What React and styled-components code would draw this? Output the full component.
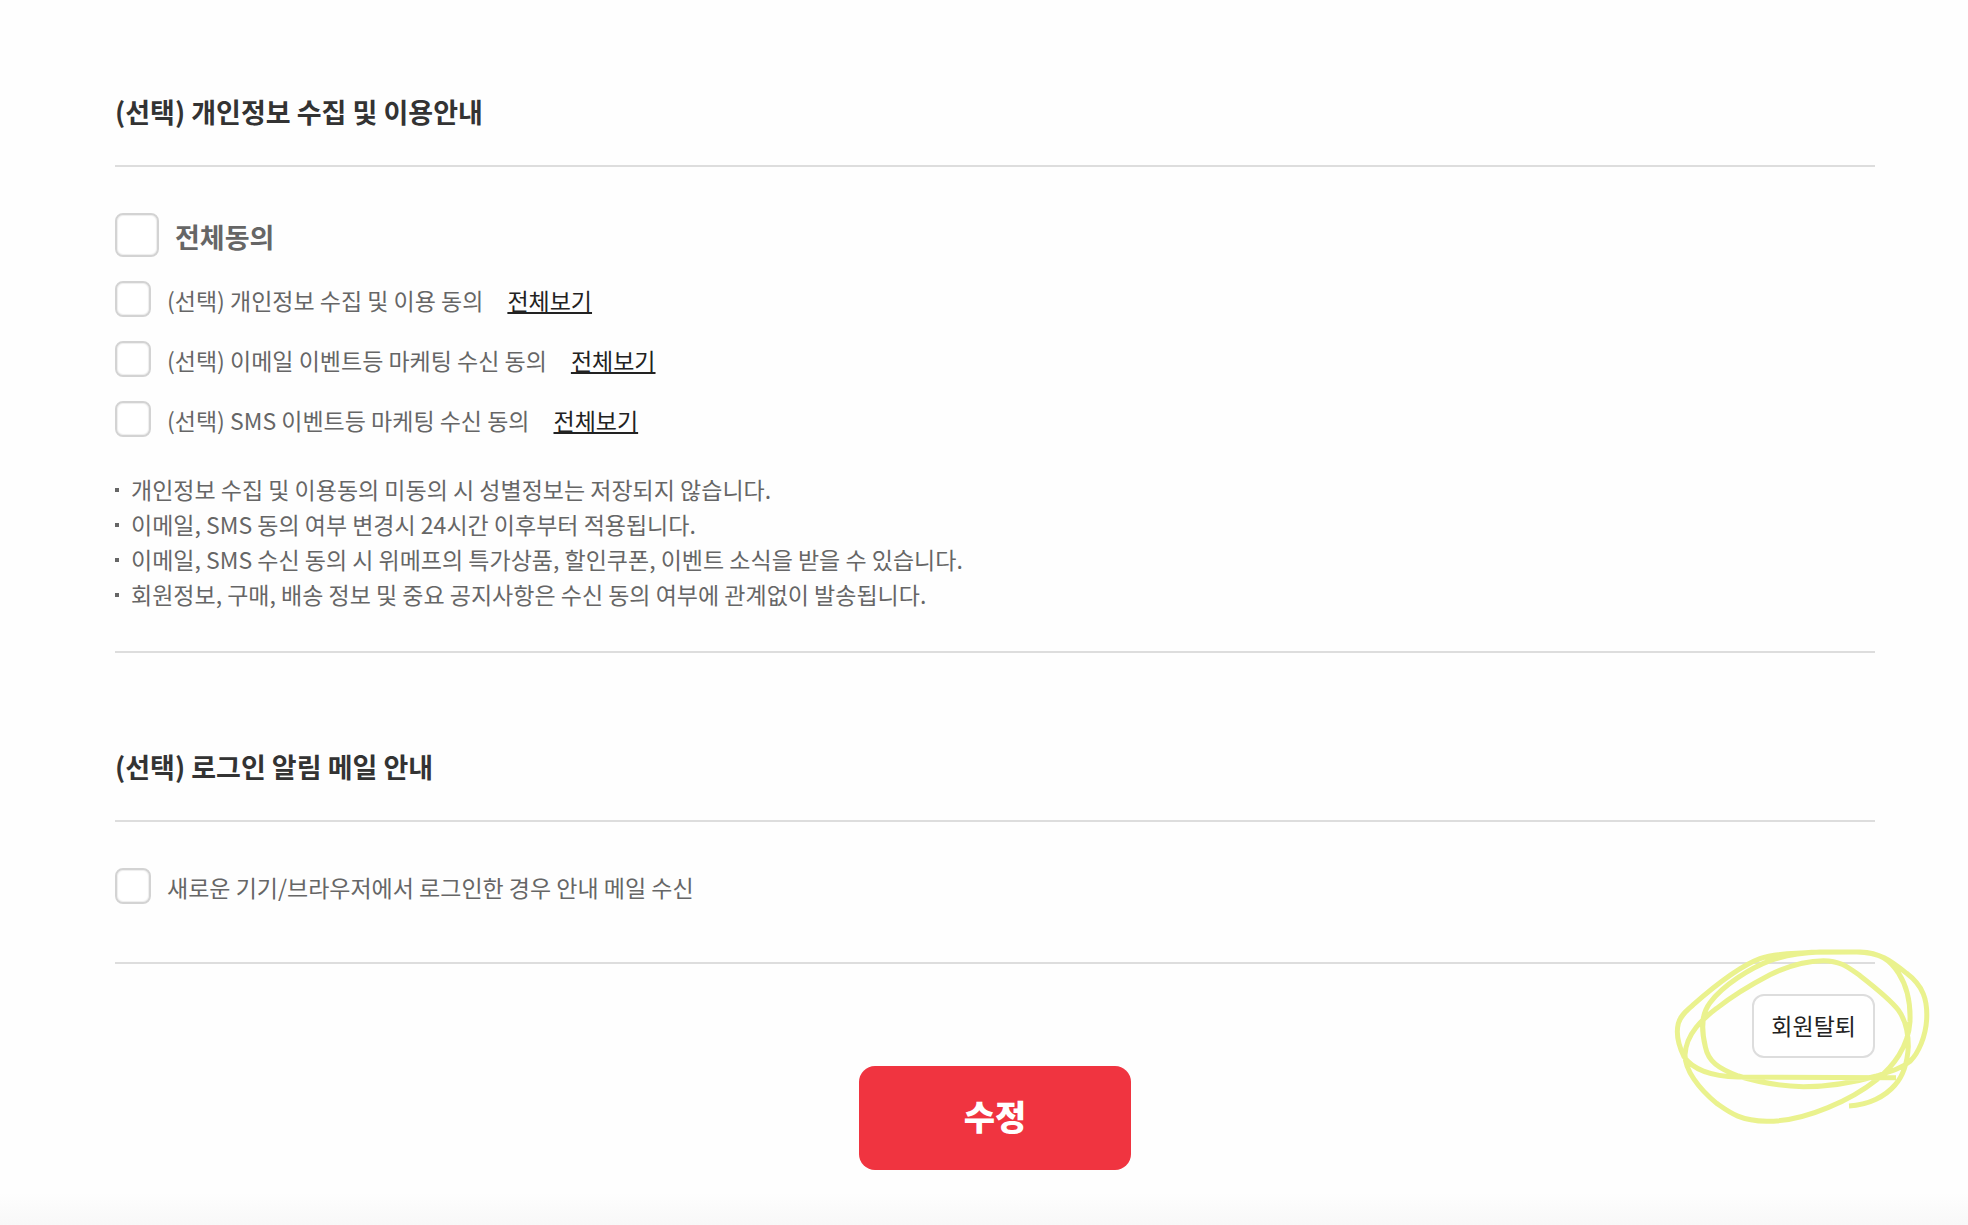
import React, { useState } from "react";
import styled, { createGlobalStyle } from "styled-components";

const GlobalStyle = createGlobalStyle`
  * { box-sizing: border-box; }
  body {
    margin: 0;
    background: #fefefe;
    color: #666;
    font-family: "Noto Sans CJK KR", "Noto Sans", sans-serif;
    font-size: 23px;
    line-height: 35px;
  }
`;

const Page = styled.main`
  display: flex;
  flex-direction: column;
  min-height: 100vh;
  padding: 92px 93px 0 115px;
`;

const Section = styled.section`
  border-bottom: 2px solid #ddd;
  padding-bottom: ${(p) => p.$bottom}px;
  & + & { margin-top: 94px; }
`;

const Heading = styled.h2`
  margin: 0;
  padding-bottom: 33px;
  border-bottom: 2px solid #ddd;
  color: #333;
  font-size: 27px;
  font-weight: 700;
  line-height: 40px;
`;

const Options = styled.div`
  display: flex;
  flex-direction: column;
  gap: 24px;
  padding-top: 46px;
`;

const OptionRow = styled.div`
  display: flex;
  align-items: center;
`;

const CheckLabel = styled.label`
  display: flex;
  align-items: center;
  gap: 16px;
  cursor: pointer;
  font-size: ${(p) => (p.$large ? 27 : 23)}px;
  font-weight: ${(p) => (p.$large ? 700 : 400)};
  line-height: 34px;
`;

const LabelText = styled.span`
  padding-top: ${(p) => (p.$large ? 4 : 2)}px;
`;

const Checkbox = styled.input`
  appearance: none;
  flex: none;
  width: ${(p) => (p.$large ? 44 : 36)}px;
  height: ${(p) => (p.$large ? 44 : 36)}px;
  margin: 0;
  border: 2px solid #d3d3d3;
  border-radius: 8px;
  background: #fff;
  box-shadow: inset 0 0 1px 1px #eee;
  cursor: pointer;
  &:checked { background: #f03440; border-color: #f03440; box-shadow: inset 0 0 0 6px #fff; }
`;

const ViewLink = styled.a`
  margin-left: 24px;
  padding-top: 2px;
  color: #222;
  line-height: 34px;
  text-decoration: underline;
  text-decoration-thickness: 2px;
  text-underline-offset: 2px;
`;

const Notes = styled.ul`
  margin: 35px 0 0;
  padding: 0;
  list-style: none;
`;

const Note = styled.li`
  display: flex;
  align-items: center;
  gap: 12px;
  &::before {
    content: "";
    flex: none;
    width: 4px;
    height: 4px;
    background: #666;
  }
`;

const Actions = styled.div`
  display: flex;
  flex-direction: column;
  align-items: center;
  gap: 8px;
  padding-top: 30px;
`;

const Marked = styled.div`
  position: relative;
  align-self: flex-end;
`;

const WithdrawButton = styled.button`
  display: block;
  height: 64px;
  padding: 0 17px 2px;
  border: 2px solid #ddd;
  border-radius: 12px;
  background: #fff;
  color: #222;
  font: inherit;
  cursor: pointer;
`;

const Scribble = styled.svg`
  position: absolute;
  top: -64px;
  right: -85px;
  width: 300px;
  height: 210px;
  pointer-events: none;
`;

const SubmitButton = styled.button`
  width: 272px;
  height: 104px;
  padding: 0 0 6px;
  border: 0;
  border-radius: 16px;
  background: #f03440;
  color: #fff;
  font-family: inherit;
  font-size: 34px;
  font-weight: 900;
  cursor: pointer;
`;

const BottomFade = styled.div`
  height: 32px;
  margin: auto -93px 0 -115px;
  background: linear-gradient(#fefefe, #f8f8f8);
`;

const consents = [
  { id: "privacy", text: "(선택) 개인정보 수집 및 이용 동의" },
  { id: "email", text: "(선택) 이메일 이벤트등 마케팅 수신 동의" },
  { id: "sms", text: "(선택) SMS 이벤트등 마케팅 수신 동의" },
];

const notes = [
  "개인정보 수집 및 이용동의 미동의 시 성별정보는 저장되지 않습니다.",
  "이메일, SMS 동의 여부 변경시 24시간 이후부터 적용됩니다.",
  "이메일, SMS 수신 동의 시 위메프의 특가상품, 할인쿠폰, 이벤트 소식을 받을 수 있습니다.",
  "회원정보, 구매, 배송 정보 및 중요 공지사항은 수신 동의 여부에 관계없이 발송됩니다.",
];

function CheckField({ id, large, checked, onChange, children }) {
  return (
    <CheckLabel htmlFor={id} $large={large}>
      <Checkbox id={id} type="checkbox" $large={large} checked={checked} onChange={onChange} />
      <LabelText $large={large}>{children}</LabelText>
    </CheckLabel>
  );
}

export default function App() {
  const [agreed, setAgreed] = useState({});
  const [loginMail, setLoginMail] = useState(false);
  const all = consents.every((c) => agreed[c.id]);

  const toggleAll = () =>
    setAgreed(Object.fromEntries(consents.map((c) => [c.id, !all])));

  return (
    <>
      <GlobalStyle />
      <Page>
        <Section $bottom={39}>
          <Heading>(선택) 개인정보 수집 및 이용안내</Heading>
          <Options>
            <OptionRow>
              <CheckField id="all" large checked={all} onChange={toggleAll}>
                전체동의
              </CheckField>
            </OptionRow>
            {consents.map((c) => (
              <OptionRow key={c.id}>
                <CheckField
                  id={c.id}
                  checked={!!agreed[c.id]}
                  onChange={() => setAgreed({ ...agreed, [c.id]: !agreed[c.id] })}
                >
                  {c.text}
                </CheckField>
                <ViewLink href={`#${c.id}`}>전체보기</ViewLink>
              </OptionRow>
            ))}
          </Options>
          <Notes>
            {notes.map((n) => (
              <Note key={n}>{n}</Note>
            ))}
          </Notes>
        </Section>

        <Section $bottom={58}>
          <Heading>(선택) 로그인 알림 메일 안내</Heading>
          <Options>
            <OptionRow>
              <CheckField id="login-mail" checked={loginMail} onChange={() => setLoginMail(!loginMail)}>
                새로운 기기/브라우저에서 로그인한 경우 안내 메일 수신
              </CheckField>
            </OptionRow>
          </Options>
        </Section>

        <Actions>
          <Marked>
            <WithdrawButton type="button">회원탈퇴</WithdrawButton>
            <Scribble viewBox="0 0 900 630" fill="none" stroke="#eaf28e" strokeWidth="15" aria-hidden="true">
              <path d="M708 443 L235 441 C150 439 95 415 72 380 C50 335 50 300 55 280 C62 255 80 243 100 224 C150 180 230 112 300 86 C350 68 400 72 455 67 L590 66 C660 67 690 90 740 130 C790 168 803 210 800 268 C797 320 775 370 750 394 C725 415 690 425 650 438 C580 458 510 470 430 470 C350 468 290 455 235 438 C175 415 145 395 136 350 C124 300 122 255 150 218 C190 165 270 115 330 92 C380 74 420 68 480 66 L600 66 C660 68 690 90 716 130 C742 170 752 220 750 275 C745 350 700 410 650 449 C580 505 440 575 320 574 C240 572 210 548 170 520 C115 475 75 420 75 375 C78 310 130 265 170 235 C220 195 280 160 330 134 C390 105 440 92 490 92 C545 93 565 113 600 137 C645 172 690 207 715 240 C735 268 745 310 745 350 C742 400 728 440 705 465 C675 500 625 525 567 528" />
            </Scribble>
          </Marked>
          <SubmitButton type="submit">수정</SubmitButton>
        </Actions>
        <BottomFade />
      </Page>
    </>
  );
}
